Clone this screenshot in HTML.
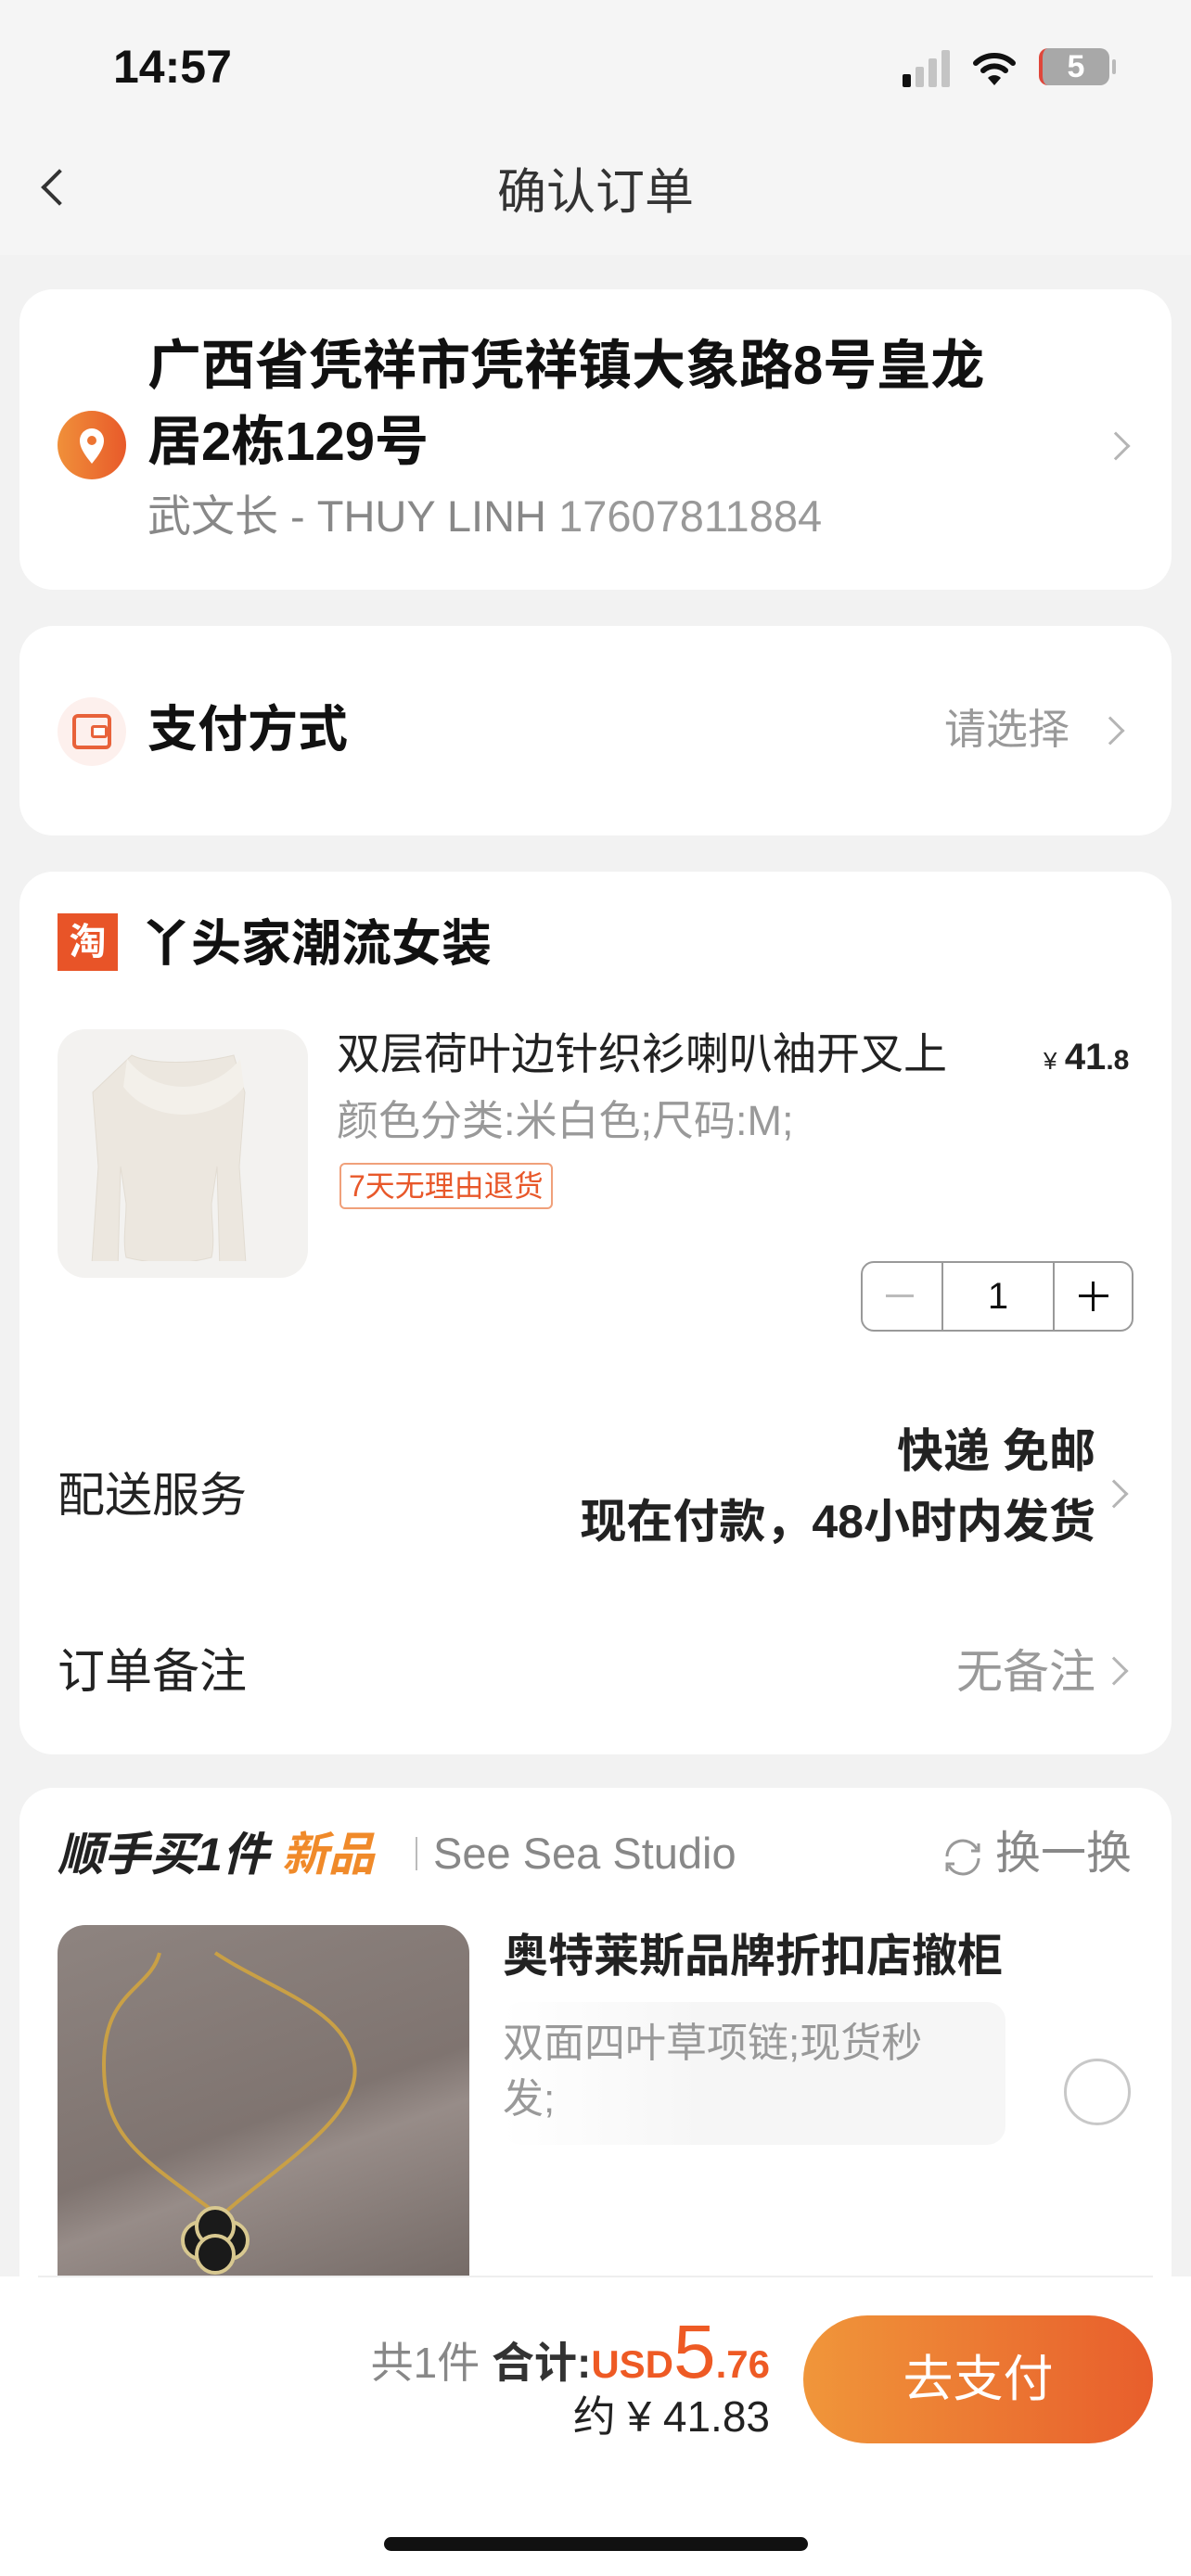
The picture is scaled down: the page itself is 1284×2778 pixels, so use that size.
<!DOCTYPE html>
<html><head><meta charset="utf-8">
<style>
*{margin:0;padding:0;box-sizing:border-box}
body{width:1284px;height:2778px;background:#f2f2f2;position:relative;overflow:hidden;font-family:"Liberation Sans","Noto Sans CJK SC",sans-serif;color:#111}
.a{position:absolute;white-space:nowrap}
.card{position:absolute;left:21px;width:1242px;background:#fff;border-radius:36px}
.chev{position:absolute;width:22px;height:22px;border-right:3px solid #b5b5b5;border-top:3px solid #b5b5b5;transform:rotate(45deg)}
</style></head><body>
<div class="a" style="left:0;top:0;width:1284px;height:275px;background:#f5f5f5"></div>
<div class="a" style="left:122px;top:44px;font-size:50px;font-weight:bold;line-height:56px">14:57</div>
<div class="a" style="left:973px;top:80px;width:9px;height:14px;background:#111;border-radius:2px"></div>
<div class="a" style="left:987px;top:72px;width:9px;height:22px;background:#c4c4c4;border-radius:2px"></div>
<div class="a" style="left:1001px;top:63px;width:9px;height:31px;background:#c4c4c4;border-radius:2px"></div>
<div class="a" style="left:1015px;top:54px;width:9px;height:40px;background:#c4c4c4;border-radius:2px"></div>
<svg class="a" style="left:1048px;top:54px" width="48" height="40" viewBox="0 0 48 40"><path d="M4 14a29 29 0 0 1 40 0" stroke="#111" stroke-width="6" fill="none" stroke-linecap="round"/><path d="M12 22a18 18 0 0 1 24 0" stroke="#111" stroke-width="6" fill="none" stroke-linecap="round"/><path d="M24 38l-7-8a10 10 0 0 1 14 0z" fill="#111"/></svg>
<div class="a" style="left:1120px;top:52px;width:76px;height:40px;background:#a8a8a8;border-radius:10px;border-left:4px solid #e0463a;color:#fff;font-weight:bold;font-size:34px;line-height:40px;text-align:center">5</div>
<div class="a" style="left:1199px;top:64px;width:4px;height:16px;background:#bbb;border-radius:2px"></div>
<div class="a" style="left:50px;top:188px;width:28px;height:28px;border-left:4px solid #333;border-bottom:4px solid #333;transform:rotate(45deg)"></div>
<div class="a" style="left:0;width:1284px;text-align:center;top:178px;font-size:53px;line-height:60px;color:#333">确认订单</div>

<div class="card" style="top:312px;height:324px"></div>
<div class="a" style="left:62px;top:443px;width:74px;height:74px;border-radius:50%;background:linear-gradient(90deg,#f0903a,#e85a2a)"></div>
<svg class="a" style="left:82px;top:458px" width="34" height="44" viewBox="0 0 34 44"><path d="M17 42C8 31 4 24 4 17a13 13 0 0 1 26 0c0 7-4 14-13 25z" fill="#fff"/><circle cx="17" cy="17" r="5" fill="#ed7432"/></svg>
<div class="a" style="left:159px;top:362px;font-size:58px;font-weight:bold;line-height:66px">广西省凭祥市凭祥镇大象路8号皇龙</div>
<div class="a" style="left:159px;top:444px;font-size:58px;font-weight:bold;line-height:66px">居2栋129号</div>
<div class="a" style="left:159px;top:530px;font-size:47px;line-height:54px;color:#888">武文长 - THUY LINH <span style="color:#999">17607811884</span></div>
<div class="chev" style="left:1192px;top:470px"></div>

<div class="card" style="top:675px;height:226px"></div>
<div class="a" style="left:62px;top:752px;width:74px;height:74px;border-radius:50%;background:#fdf0ed"></div>
<div class="a" style="left:78px;top:770px;width:42px;height:38px;border:4px solid #e8623a;border-radius:6px"></div>
<div class="a" style="left:98px;top:782px;width:18px;height:14px;border:3px solid #e8623a;border-radius:3px;background:#fff"></div>
<div class="a" style="left:159px;top:756px;font-size:54px;font-weight:bold;line-height:62px">支付方式</div>
<div class="a" style="left:1018px;top:760px;font-size:45px;line-height:54px;color:#999">请选择</div>
<div class="chev" style="left:1186px;top:777px"></div>

<div class="card" style="top:940px;height:952px"></div>
<div class="a" style="left:62px;top:985px;width:65px;height:62px;background:#e85428;color:#fff;font-size:40px;font-weight:bold;line-height:62px;text-align:center">淘</div>
<div class="a" style="left:152px;top:988px;font-size:54px;font-weight:bold;line-height:60px">丫头家潮流女装</div>
<div class="a" style="left:62px;top:1110px;width:270px;height:268px;background:#f3f2f0;border-radius:30px"></div>
<svg class="a" style="left:92px;top:1130px" width="210" height="230" viewBox="0 0 210 230"><path d="M50 8c20 10 70 10 110 0l12 40-6 80 10 150-30 0-4-150-6 40c0 20 4 40 0 58-30 8-60 8-92 0-4-18 0-38 0-58l-6-40-4 150-30 0 10-150-6-80z" fill="#ece7df" stroke="#e2dcd2"/><path d="M45 12c30 40 90 40 122 0l4 30c-30 40-100 40-130 0z" fill="#f3f0ea"/></svg>
<div class="a" style="left:363px;top:1110px;font-size:47px;line-height:54px;color:#222">双层荷叶边针织衫喇叭袖开叉上</div>
<div class="a" style="left:1125px;top:1116px;font-size:30px;line-height:48px;color:#222"><span style="font-size:26px">¥</span> <b style="font-size:40px">41</b><b style="font-size:30px">.8</b></div>
<div class="a" style="left:363px;top:1183px;font-size:45px;line-height:52px;color:#999">颜色分类:米白色;尺码:M;</div>
<div class="a" style="left:366px;top:1254px;height:50px;padding:0 8px;border:2px solid #f0a07a;border-radius:6px;color:#e8582a;font-size:32px;line-height:46px">7天无理由退货</div>
<div class="a" style="left:928px;top:1360px;width:294px;height:76px;border:2px solid #999;border-radius:14px"></div>
<div class="a" style="left:1015px;top:1361px;width:2px;height:74px;background:#999"></div>
<div class="a" style="left:1135px;top:1361px;width:2px;height:74px;background:#999"></div>
<div class="a" style="left:955px;top:1396px;width:30px;height:3px;background:#bbb"></div>
<div class="a" style="left:1017px;top:1370px;width:118px;text-align:center;font-size:40px;line-height:56px">1</div>
<div class="a" style="left:1163px;top:1396px;width:32px;height:3px;background:#111"></div>
<div class="a" style="left:1177px;top:1382px;width:3px;height:32px;background:#111"></div>

<div class="a" style="left:62px;top:1584px;font-size:51px;line-height:58px;color:#222">配送服务</div>
<div class="a" style="left:0;width:1181px;text-align:right;top:1536px;font-size:50px;line-height:58px;font-weight:bold;color:#222">快递 免邮</div>
<div class="a" style="left:0;width:1181px;text-align:right;top:1612px;font-size:50px;line-height:58px;font-weight:bold;color:#222">现在付款，48小时内发货</div>
<div class="chev" style="left:1190px;top:1600px"></div>
<div class="a" style="left:62px;top:1774px;font-size:51px;line-height:58px;color:#222">订单备注</div>
<div class="a" style="left:0;width:1181px;text-align:right;top:1774px;font-size:50px;line-height:58px;color:#999">无备注</div>
<div class="chev" style="left:1190px;top:1791px"></div>

<div class="card" style="top:1928px;height:600px"></div>
<div class="a" style="left:62px;top:1970px;font-size:50px;line-height:60px;font-weight:bold;font-style:italic;color:#222">顺手买1件 <span style="color:#f08a2a">新品</span></div>
<div class="a" style="left:448px;top:1981px;width:2px;height:36px;background:#bbb"></div>
<div class="a" style="left:467px;top:1971px;font-size:47px;line-height:56px;color:#888">See Sea Studio</div>
<svg class="a" style="left:1013px;top:1980px" width="50" height="46" viewBox="0 0 50 46"><path d="M8 22a17 17 0 0 1 32-8M42 24a17 17 0 0 1-32 8" stroke="#999" stroke-width="3" fill="none"/><path d="M42 8v8h-8M8 38v-8h8" stroke="#999" stroke-width="3" fill="none"/></svg>
<div class="a" style="left:1073px;top:1971px;font-size:49px;line-height:56px;color:#888">换一换</div>
<div class="a" style="left:62px;top:2076px;width:444px;height:420px;border-radius:30px 30px 0 0;background:linear-gradient(160deg,#8e8480,#7f7470 50%,#978c88 60%,#6e6460)"></div>
<svg class="a" style="left:62px;top:2076px" width="444" height="380" viewBox="0 0 444 380"><path d="M110 30c-10 40-60 40-60 120s40 100 120 160M170 30c60 40 140 60 150 120s-100 120-150 170" stroke="#c9a046" stroke-width="4" fill="none"/><g fill="#1a1a1a" stroke="#d8c890" stroke-width="4"><circle cx="155" cy="340" r="20"/><circle cx="185" cy="340" r="20"/><circle cx="170" cy="325" r="20"/><circle cx="170" cy="355" r="20"/></g></svg>
<div class="a" style="left:542px;top:2081px;font-size:49px;line-height:58px;font-weight:bold;color:#222">奥特莱斯品牌折扣店撤柜</div>
<div class="a" style="left:542px;top:2159px;width:542px;height:154px;border-radius:20px;background:linear-gradient(90deg,#fff,#f6f6f6 40%)"></div>
<div class="a" style="left:542px;top:2174px;font-size:44px;line-height:60px;color:#999;white-space:normal;width:480px">双面四叶草项链;现货秒<br>发;</div>
<div class="a" style="left:1147px;top:2220px;width:72px;height:72px;border-radius:50%;border:3px solid #c8c8c8"></div>

<div class="a" style="left:0;top:2455px;width:1284px;height:323px;background:#fff"></div>
<div class="a" style="left:41px;top:2454px;width:1202px;height:2px;background:#eee"></div>
<div class="a" style="left:0;width:830px;text-align:right;top:2500px;font-size:46px;line-height:74px;color:#333"><span style="color:#888">共1件</span> <b>合计:</b><b style="color:#ee5a24;font-size:42px">USD</b><span style="color:#ee5a24;font-size:82px">5</span><b style="color:#ee5a24;font-size:42px">.76</b></div>
<div class="a" style="left:0;width:830px;text-align:right;top:2578px;font-size:46px;line-height:56px;color:#222">约 ¥ 41.83</div>
<div class="a" style="left:866px;top:2497px;width:377px;height:138px;border-radius:69px;background:linear-gradient(90deg,#f0963a,#e85e2c);color:#fff;font-size:54px;line-height:138px;text-align:center">去支付</div>
<div class="a" style="left:414px;top:2736px;width:457px;height:15px;border-radius:8px;background:#111"></div>
</body></html>
